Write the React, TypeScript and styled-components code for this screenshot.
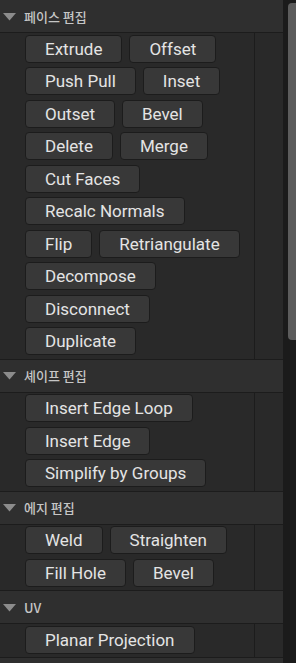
import React from "react";
import styled, { createGlobalStyle } from "styled-components";

const Global = createGlobalStyle`
  html, body { margin: 0; padding: 0; background: #1b1b1b; }
  body { font-family: Roboto, "Noto Sans", "Noto Sans CJK KR", sans-serif; }
`;

const Root = styled.div`
  width: 296px;
  height: 663px;
  display: flex;
  overflow: hidden;
  background: #1b1b1b;
`;

const Panel = styled.div`
  width: 283px;
  display: flex;
  flex-direction: column;
  background: #292929;
`;

const Track = styled.div`
  width: 13px;
  background: #1b1b1b;
  padding-top: 3px;
  box-sizing: border-box;
`;

const Thumb = styled.div`
  margin-left: 5px;
  width: 8px;
  height: 337px;
  background: #5c5c5c;
  border-radius: 4px 0 0 4px;
`;

const Header = styled.div`
  height: 32px;
  border-bottom: 1px solid #1c1c1c;
  background: #2f2f2f;
  display: flex;
  align-items: center;
  gap: 8px;
  padding-left: 3px;
  flex-shrink: 0;
`;

const Triangle = styled.svg`
  width: 13px;
  height: 8px;
  margin-top: 1px;
`;

const Title = styled.span`
  font-family: "Noto Sans CJK KR", "Noto Sans", sans-serif;
  font-size: 13px;
  font-weight: 500;
  color: #c6c6c6;
`;

const Body = styled.div`
  display: grid;
  grid-template-columns: 254px 1fr;
  border-bottom: 1px solid #1c1c1c;
  flex-shrink: 0;
`;

const Rows = styled.div`
  padding: 1.5px 0 3.5px 25px;
  display: flex;
  flex-direction: column;
  gap: 4.5px;
`;

const Side = styled.div`
  border-left: 1px solid #1c1c1c;
`;

const Row = styled.div`
  display: flex;
  gap: 7px;
`;

const Button = styled.button`
  height: 28px;
  box-sizing: border-box;
  padding: 0 19px;
  background: #383838;
  border: 1px solid #1c1c1c;
  border-radius: 4px;
  color: #e4e4e4;
  font-family: Roboto, "Noto Sans", sans-serif;
  font-size: 17px;
  line-height: 26px;
  white-space: nowrap;
  cursor: pointer;
`;

const sections: { title: string; rows: string[][] }[] = [
  {
    title: "페이스 편집",
    rows: [
      ["Extrude", "Offset"],
      ["Push Pull", "Inset"],
      ["Outset", "Bevel"],
      ["Delete", "Merge"],
      ["Cut Faces"],
      ["Recalc Normals"],
      ["Flip", "Retriangulate"],
      ["Decompose"],
      ["Disconnect"],
      ["Duplicate"],
    ],
  },
  {
    title: "셰이프 편집",
    rows: [["Insert Edge Loop"], ["Insert Edge"], ["Simplify by Groups"]],
  },
  {
    title: "에지 편집",
    rows: [
      ["Weld", "Straighten"],
      ["Fill Hole", "Bevel"],
    ],
  },
  {
    title: "UV",
    rows: [["Planar Projection"]],
  },
];

export default function App() {
  return (
    <Root>
      <Global />
      <Panel>
        {sections.map((s) => (
          <React.Fragment key={s.title}>
            <Header>
              <Triangle viewBox="0 0 13 8">
                <path d="M0 0 H13 L6.5 7.5 Z" fill="#8c8c8c" />
              </Triangle>
              <Title>{s.title}</Title>
            </Header>
            <Body>
              <Rows>
                {s.rows.map((r, i) => (
                  <Row key={i}>
                    {r.map((b) => (
                      <Button key={b}>{b}</Button>
                    ))}
                  </Row>
                ))}
              </Rows>
              <Side />
            </Body>
          </React.Fragment>
        ))}
        <Header />
      </Panel>
      <Track>
        <Thumb />
      </Track>
    </Root>
  );
}
